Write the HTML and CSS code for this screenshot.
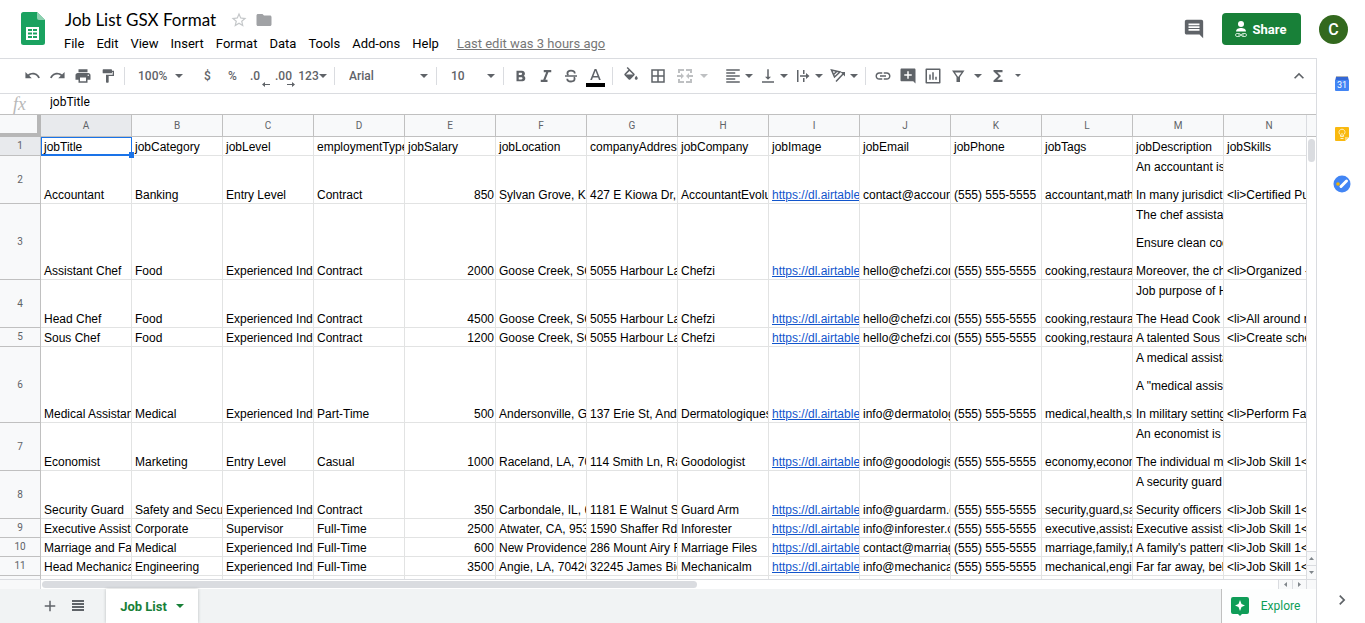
FILE: index.html
```html
<!DOCTYPE html>
<html lang="en">
<head>
    <meta charset="UTF-8">
    <meta name="viewport" content="width=device-width, initial-scale=1.0">
    <title>Job List GSX Format</title>
    <link rel="stylesheet" href="styles.css">
</head>
<body>
    <header class="header">
        <a class="logo" href="#" aria-label="Sheets home">
            <svg width="24" height="33" viewBox="0 0 24 33">
                <path fill="#1aa260" d="M2.500 0H16l8 8v22.500a2.500 2.500 0 0 1-2.500 2.500h-19A2.500 2.500 0 0 1 0 30.500v-28A2.500 2.500 0 0 1 2.500 0z"/>
                <path fill="#8ed1b1" d="M16 0l8 8h-6a2 2 0 0 1-2-2z"/>
                <path fill="#fff" fill-rule="evenodd" d="M5 15h13v13H5zM7 17v2h4v-2zM12 17v2h4v-2zM7 20.500v2h4v-2zM12 20.500v2h4v-2zM7 24v2h4v-2zM12 24v2h4v-2z"/>
            </svg>
        </a>
        <div class="doc-info">
            <div class="title-row">
                <h1 class="doc-title">Job List GSX Format</h1>
                <button class="title-button" aria-label="Star">
                    <svg width="18" height="18" viewBox="0 0 24 24"><path fill="#c4c7c9" d="M22 9.240l-7.190-.62L12 2 9.190 8.630 2 9.240l5.460 4.730L5.820 21 12 17.270 18.180 21l-1.630-7.030L22 9.240zM12 15.400l-3.760 2.270 1-4.280-3.320-2.880 4.380-.38L12 6.100l1.710 4.040 4.380.38-3.320 2.880 1 4.280L12 15.400z"/></svg>
                </button>
                <button class="title-button" aria-label="Move to folder">
                    <svg width="18" height="18" viewBox="0 0 24 24"><path fill="#a0a2a5" d="M10 4H4c-1.100 0-2 .9-2 2v12c0 1.100.9 2 2 2h16c1.100 0 2-.9 2-2V8c0-1.100-.9-2-2-2h-8l-2-2z"/></svg>
                </button>
            </div>
            <nav class="menu-bar">
                <button>File</button>
                <button>Edit</button>
                <button>View</button>
                <button>Insert</button>
                <button>Format</button>
                <button>Data</button>
                <button>Tools</button>
                <button>Add-ons</button>
                <button>Help</button>
                <a class="last-edit" href="#">Last edit was 3 hours ago</a>
            </nav>
        </div>
        <div class="header-actions">
            <button class="comments-button" aria-label="Comments">
                <svg width="22" height="22" viewBox="0 0 24 24"><path fill="#5f6368" d="M21.990 4c0-1.100-.89-2-1.990-2H4c-1.100 0-2 .9-2 2v12c0 1.100.9 2 2 2h14l4 4-.01-18zM18 14H6v-2h12v2zm0-3H6V9h12v2zm0-3H6V6h12v2z"/></svg>
            </button>
            <button class="share-button">
                <svg width="14" height="18" viewBox="0 0 14 18">
                    <circle cx="7" cy="4" r="3" fill="#fff"/>
                    <path fill="#fff" d="M2 11.500c0-2.500 2.500-3.500 5-3.500s5 1 5 3.500z"/>
                    <g fill="none" stroke="#c5e3cd"><rect x="1.500" y="13.500" width="5" height="3" rx="1.500"/><rect x="7.500" y="13.500" width="5" height="3" rx="1.500"/><path d="M4 15h6"/></g>
                </svg>
                <span>Share</span>
            </button>
            <button class="avatar" aria-label="Account">C</button>
        </div>
    </header>

    <div class="workspace">
        <main class="editor">
            <div class="toolbar">
                <div class="tools">
                    <button aria-label="Undo"><svg width="17" height="17" viewBox="0 0 24 24"><path d="M12.500 8c-2.650 0-5.050.99-6.900 2.600L2 7v9h9l-3.620-3.620c1.390-1.160 3.160-1.880 5.120-1.880 3.540 0 6.550 2.310 7.600 5.500l2.370-.78C21.080 11.030 17.150 8 12.500 8z"/></svg></button>
                    <button aria-label="Redo"><svg width="17" height="17" viewBox="0 0 24 24"><path d="M18.400 10.600C16.550 8.990 14.150 8 11.500 8c-4.650 0-8.580 3.030-9.960 7.220L3.900 16c1.050-3.190 4.050-5.500 7.600-5.500 1.950 0 3.730.72 5.120 1.880L13 16h9V7l-3.600 3.600z"/></svg></button>
                    <button aria-label="Print"><svg width="18" height="18" viewBox="0 0 24 24"><path d="M19 8H5c-1.660 0-3 1.340-3 3v6h4v4h12v-4h4v-6c0-1.660-1.340-3-3-3zm-3 11H8v-5h8v5zm3-7c-.55 0-1-.45-1-1s.45-1 1-1 1 .45 1 1-.45 1-1 1zm-1-9H6v4h12V3z"/></svg></button>
                    <button aria-label="Paint format"><svg width="16" height="16" viewBox="0 0 24 24"><path d="M18 4V3c0-.55-.45-1-1-1H5c-.55 0-1 .45-1 1v4c0 .55.45 1 1 1h12c.55 0 1-.45 1-1V6h1v4H9v11c0 .55.45 1 1 1h2c.55 0 1-.45 1-1v-9h8V4h-3z"/></svg></button>
                </div>
                <div class="tools">
                    <label class="picker zoom-picker">
                        <select aria-label="Zoom"><option>100%</option></select>
                        <svg class="caret" width="8" height="4" viewBox="0 0 8 4"><path d="M0 0h8L4 4z"/></svg>
                    </label>
                    <button aria-label="Format as currency">$</button>
                    <button aria-label="Format as percent">%</button>
                    <button class="decimals" aria-label="Decrease decimal places">.0<svg width="8" height="5" viewBox="0 0 8 5"><path d="M0 2.500L3 0v2h5v1H3v2z"/></svg></button>
                    <button class="decimals" aria-label="Increase decimal places">.00<svg width="8" height="5" viewBox="0 0 8 5"><path d="M8 2.500L5 0v2H0v1h5v2z"/></svg></button>
                    <button class="formats-button" aria-label="More formats">123<svg class="caret" width="8" height="4" viewBox="0 0 8 4"><path d="M0 0h8L4 4z"/></svg></button>
                </div>
                <div class="tools">
                    <label class="picker font-picker">
                        <select aria-label="Font"><option>Arial</option></select>
                        <svg class="caret" width="8" height="4" viewBox="0 0 8 4"><path d="M0 0h8L4 4z"/></svg>
                    </label>
                </div>
                <div class="tools">
                    <label class="picker size-picker">
                        <select aria-label="Font size"><option>10</option></select>
                        <svg class="caret" width="8" height="4" viewBox="0 0 8 4"><path d="M0 0h8L4 4z"/></svg>
                    </label>
                </div>
                <div class="tools">
                    <button aria-label="Bold"><svg width="18" height="18" viewBox="0 0 24 24"><path d="M15.600 11.790c.97-.67 1.650-1.770 1.650-2.790 0-2.260-1.750-4-4-4H6v14h8.040c2.090 0 3.710-1.700 3.710-3.790 0-1.520-.86-2.820-2.150-3.420zM9 7.500h3c.83 0 1.500.67 1.500 1.500s-.67 1.500-1.500 1.500H9v-3zm3.500 9H9v-3h3.500c.83 0 1.500.67 1.500 1.500s-.67 1.500-1.500 1.500z"/></svg></button>
                    <button aria-label="Italic"><svg width="18" height="18" viewBox="0 0 24 24"><path d="M9 4v3h3.200l-3.900 10H5v3h9v-3h-2.700l3.900-10H19V4z"/></svg></button>
                    <button aria-label="Strikethrough"><svg width="18" height="18" viewBox="0 0 24 24"><path d="M4 11h16v2H4z"/><path fill="none" stroke="#5f6368" stroke-width="2.400" d="M17 8.500C17 6 15 4.700 12 4.700S7.200 6 7.200 8.200c0 1 .5 1.800 1.300 2.400M7 15.500c0 2.500 2 3.800 5 3.800s4.800-1.300 4.800-3.500c0-.9-.3-1.600-.9-2.200"/></svg></button>
                    <button class="text-color" aria-label="Text color"><svg width="19" height="20" viewBox="0 0 19 20"><path d="M8.600 1L4.200 12H6l.9-2.500h5.200L13 12h1.800L10.400 1zM7.500 8l2-5.300 2 5.300z"/><path fill="#000" d="M0 15h19v4H0z"/></svg></button>
                </div>
                <div class="tools">
                    <button class="wide" aria-label="Fill color"><svg width="18" height="18" viewBox="0 0 24 24"><path d="M16.560 8.940L7.620 0 6.210 1.410l2.380 2.380-5.150 5.150c-.59.59-.59 1.540 0 2.120l5.500 5.500c.29.29.68.44 1.060.44s.77-.15 1.060-.44l5.500-5.500c.59-.58.59-1.530 0-2.120zM5.210 10L10 5.210 14.790 10H5.210zM19 11.500s-2 2.170-2 3.500c0 1.100.9 2 2 2s2-.9 2-2c0-1.330-2-3.500-2-3.500z"/></svg></button>
                    <button class="wide" aria-label="Borders"><svg width="18" height="18" viewBox="0 0 24 24"><path d="M3 3v18h18V3H3zm8 16H5v-6h6v6zm0-8H5V5h6v6zm8 8h-6v-6h6v6zm0-8h-6V5h6v6z"/></svg></button>
                    <button class="merge-button" aria-label="Merge cells" disabled><svg width="18" height="18" viewBox="0 0 18 18"><path d="M2 2h6v2H4v2H2zM10 2h6v4h-2V4h-4zM2 12h2v2h4v2H2zM14 12h2v4h-6v-2h4zM1 8h4V6l3 3-3 3v-2H1zM17 8h-4V6l-3 3 3 3v-2h4z"/></svg><svg class="caret" width="8" height="4" viewBox="0 0 8 4"><path d="M0 0h8L4 4z"/></svg></button>
                    <button class="menu-button" aria-label="Horizontal align"><svg width="18" height="18" viewBox="0 0 24 24"><path d="M15 15H3v2h12v-2zm0-8H3v2h12V7zM3 13h18v-2H3v2zm0 8h18v-2H3v2zM3 3v2h18V3H3z"/></svg><svg class="caret" width="8" height="4" viewBox="0 0 8 4"><path d="M0 0h8L4 4z"/></svg></button>
                    <button class="menu-button" aria-label="Vertical align"><svg width="18" height="18" viewBox="0 0 24 24"><path d="M16 13h-3V3h-2v10H8l4 4 4-4zM4 19v2h16v-2H4z"/></svg><svg class="caret" width="8" height="4" viewBox="0 0 8 4"><path d="M0 0h8L4 4z"/></svg></button>
                    <button class="menu-button" aria-label="Text wrapping"><svg width="18" height="18" viewBox="0 0 18 18"><path d="M3 3h1.500v12H3zM9 3h1.500v4H9zM9 11h1.500v4H9zM6 8.200h6V6l3.500 3L12 12V9.800H6z"/></svg><svg class="caret" width="8" height="4" viewBox="0 0 8 4"><path d="M0 0h8L4 4z"/></svg></button>
                    <button class="menu-button" aria-label="Text rotation"><svg width="18" height="18" viewBox="0 0 18 18"><path fill="none" stroke="#5f6368" stroke-width="1.500" d="M2.500 3L11 5 5.500 10zM8 4.200L4.500 7.500M7 14.500l8-8.500"/><path d="M11.500 5H16v4.500z"/></svg><svg class="caret" width="8" height="4" viewBox="0 0 8 4"><path d="M0 0h8L4 4z"/></svg></button>
                </div>
                <div class="tools">
                    <button aria-label="Insert link"><svg width="18" height="18" viewBox="0 0 24 24"><path d="M3.900 12c0-1.710 1.390-3.100 3.100-3.100h4V7H7c-2.760 0-5 2.240-5 5s2.240 5 5 5h4v-1.900H7c-1.710 0-3.100-1.390-3.100-3.100zM8 13h8v-2H8v2zm9-6h-4v1.900h4c1.710 0 3.100 1.390 3.100 3.100s-1.390 3.100-3.100 3.100h-4V17h4c2.760 0 5-2.240 5-5s-2.240-5-5-5z"/></svg></button>
                    <button aria-label="Insert comment"><svg width="18" height="18" viewBox="0 0 24 24"><path d="M22 22V3.500c0-.9-.6-1.500-1.500-1.500h-17C2.600 2 2 2.600 2 3.500v14c0 .9.6 1.500 1.500 1.500H19zM17 11.500h-4v4h-2v-4H7v-2h4v-4h2v4h4z"/></svg></button>
                    <button aria-label="Insert chart"><svg width="18" height="18" viewBox="0 0 24 24"><path d="M3 2h18v0c.6 0 1 .4 1 1v18c0 .6-.4 1-1 1H3c-.6 0-1-.4-1-1V3c0-.6.4-1 1-1zm1 2v16h16V4zM7 10h2v7H7zM11 7h2v10h-2zM15 13h2v4h-2z" fill-rule="evenodd"/></svg></button>
                    <button aria-label="Create a filter"><svg width="18" height="18" viewBox="0 0 18 18"><path fill-rule="evenodd" d="M3 3.500h12.500L11 10v5H7.500v-5zM6 5.500L9.200 10 12.500 5.500z"/></svg></button>
                    <button class="slim" aria-label="Filter views"><svg class="caret" width="8" height="4" viewBox="0 0 8 4"><path d="M0 0h8L4 4z"/></svg></button>
                    <button aria-label="Functions"><svg width="18" height="18" viewBox="0 0 24 24"><path d="M18 4H6v2l6.500 6L6 18v2h12v-3h-7l5-5-5-5h7z"/></svg></button>
                    <button class="slim" aria-label="More functions"><svg class="caret" width="6" height="3" viewBox="0 0 6 3"><path d="M0 0h6L3 3z"/></svg></button>
                </div>
                <button class="collapse-button" aria-label="Hide the menus"><svg width="20" height="20" viewBox="0 0 24 24"><path d="M12 8l-6 6 1.410 1.410L12 10.830l4.590 4.580L18 14z"/></svg></button>
            </div>

            <div class="formula-bar">
                <label class="fx" for="formula">fx</label>
                <input id="formula" class="formula-input" type="text" value="jobTitle">
            </div>

            <div class="sheet">
                <div class="grid">
                    <table>
                        <thead>
                            <tr>
                                <th class="corner"></th>
                                <th class="selected">A</th><th>B</th><th>C</th><th>D</th><th>E</th><th>F</th><th>G</th><th>H</th><th>I</th><th>J</th><th>K</th><th>L</th><th>M</th><th>N</th>
                            </tr>
                        </thead>
                        <tbody>
                            <tr>
                                <th class="selected">1</th>
                                <td class="active-cell">jobTitle</td><td>jobCategory</td><td>jobLevel</td><td>employmentType</td><td>jobSalary</td><td>jobLocation</td><td>companyAddress</td><td>jobCompany</td><td>jobImage</td><td>jobEmail</td><td>jobPhone</td><td>jobTags</td><td>jobDescription</td><td>jobSkills</td>
                            </tr>
                            <tr class="medium">
                                <th>2</th>
                                <td>Accountant</td><td>Banking</td><td>Entry Level</td><td>Contract</td><td class="number">850</td><td>Sylvan Grove, KS</td><td>427 E Kiowa Dr,</td><td>AccountantEvolu</td><td><a href="#">https://dl.airtable.</a></td><td>contact@accoun</td><td>(555) 555-5555</td><td>accountant,math,</td><td>An accountant is<br><br>In many jurisdicti</td><td>&lt;li&gt;Certified Pu</td>
                            </tr>
                            <tr class="tall">
                                <th>3</th>
                                <td>Assistant Chef</td><td>Food</td><td>Experienced Indi</td><td>Contract</td><td class="number">2000</td><td>Goose Creek, SC</td><td>5055 Harbour La</td><td>Chefzi</td><td><a href="#">https://dl.airtable.</a></td><td>hello@chefzi.com</td><td>(555) 555-5555</td><td>cooking,restaurar</td><td>The chef assistar<br><br>Ensure clean coo<br><br>Moreover, the che</td><td>&lt;li&gt;Organized -</td>
                            </tr>
                            <tr class="medium">
                                <th>4</th>
                                <td>Head Chef</td><td>Food</td><td>Experienced Indi</td><td>Contract</td><td class="number">4500</td><td>Goose Creek, SC</td><td>5055 Harbour La</td><td>Chefzi</td><td><a href="#">https://dl.airtable.</a></td><td>hello@chefzi.com</td><td>(555) 555-5555</td><td>cooking,restaurar</td><td>Job purpose of H<br><br>The Head Cook o</td><td>&lt;li&gt;All around r</td>
                            </tr>
                            <tr>
                                <th>5</th>
                                <td>Sous Chef</td><td>Food</td><td>Experienced Indi</td><td>Contract</td><td class="number">1200</td><td>Goose Creek, SC</td><td>5055 Harbour La</td><td>Chefzi</td><td><a href="#">https://dl.airtable.</a></td><td>hello@chefzi.com</td><td>(555) 555-5555</td><td>cooking,restaurar</td><td>A talented Sous C</td><td>&lt;li&gt;Create sche</td>
                            </tr>
                            <tr class="tall">
                                <th>6</th>
                                <td>Medical Assistan</td><td>Medical</td><td>Experienced Indi</td><td>Part-Time</td><td class="number">500</td><td>Andersonville, GA</td><td>137 Erie St, Ande</td><td>Dermatologiques</td><td><a href="#">https://dl.airtable.</a></td><td>info@dermatolog</td><td>(555) 555-5555</td><td>medical,health,sa</td><td>A medical assista<br><br>A "medical assist<br><br>In military setting</td><td>&lt;li&gt;Perform Fac</td>
                            </tr>
                            <tr class="medium">
                                <th>7</th>
                                <td>Economist</td><td>Marketing</td><td>Entry Level</td><td>Casual</td><td class="number">1000</td><td>Raceland, LA, 70</td><td>114 Smith Ln, Ra</td><td>Goodologist</td><td><a href="#">https://dl.airtable.</a></td><td>info@goodologis</td><td>(555) 555-5555</td><td>economy,econom</td><td>An economist is a<br><br>The individual ma</td><td>&lt;li&gt;Job Skill 1&lt;</td>
                            </tr>
                            <tr class="medium">
                                <th>8</th>
                                <td>Security Guard</td><td>Safety and Secur</td><td>Experienced Indi</td><td>Contract</td><td class="number">350</td><td>Carbondale, IL, 6</td><td>1181 E Walnut St</td><td>Guard Arm</td><td><a href="#">https://dl.airtable.</a></td><td>info@guardarm.c</td><td>(555) 555-5555</td><td>security,guard,sa</td><td>A security guard<br><br>Security officers a</td><td>&lt;li&gt;Job Skill 1&lt;</td>
                            </tr>
                            <tr>
                                <th>9</th>
                                <td>Executive Assista</td><td>Corporate</td><td>Supervisor</td><td>Full-Time</td><td class="number">2500</td><td>Atwater, CA, 953</td><td>1590 Shaffer Rd,</td><td>Inforester</td><td><a href="#">https://dl.airtable.</a></td><td>info@inforester.c</td><td>(555) 555-5555</td><td>executive,assista</td><td>Executive assista</td><td>&lt;li&gt;Job Skill 1&lt;</td>
                            </tr>
                            <tr>
                                <th>10</th>
                                <td>Marriage and Far</td><td>Medical</td><td>Experienced Indi</td><td>Full-Time</td><td class="number">600</td><td>New Providence,</td><td>286 Mount Airy R</td><td>Marriage Files</td><td><a href="#">https://dl.airtable.</a></td><td>contact@marriag</td><td>(555) 555-5555</td><td>marriage,family,th</td><td>A family's pattern</td><td>&lt;li&gt;Job Skill 1&lt;</td>
                            </tr>
                            <tr>
                                <th>11</th>
                                <td>Head Mechanica</td><td>Engineering</td><td>Experienced Indi</td><td>Full-Time</td><td class="number">3500</td><td>Angie, LA, 70426</td><td>32245 James Bic</td><td>Mechanicalm</td><td><a href="#">https://dl.airtable.</a></td><td>info@mechanica</td><td>(555) 555-5555</td><td>mechanical,engir</td><td>Far far away, beh</td><td>&lt;li&gt;Job Skill 1&lt;</td>
                            </tr>
                            <tr>
                                <th></th>
                                <td></td><td></td><td></td><td></td><td></td><td></td><td></td><td></td><td></td><td></td><td></td><td></td><td></td><td></td>
                            </tr>
                        </tbody>
                    </table>
                </div>
                <div class="scroll-y">
                    <div class="scroll-head"></div>
                    <div class="thumb-y"></div>
                    <button aria-label="Scroll up"><svg width="5" height="3" viewBox="0 0 5 3"><path d="M0 3h5L2.500 0z"/></svg></button>
                    <button aria-label="Scroll down"><svg width="5" height="3" viewBox="0 0 5 3"><path d="M0 0h5L2.500 3z"/></svg></button>
                </div>
                <div class="scroll-x">
                    <div class="scroll-start"></div>
                    <div class="track-x"><div class="thumb-x"></div></div>
                    <button aria-label="Scroll left"><svg width="3" height="5" viewBox="0 0 3 5"><path d="M3 0v5L0 2.500z"/></svg></button>
                    <button aria-label="Scroll right"><svg width="3" height="5" viewBox="0 0 3 5"><path d="M0 0v5l3-2.500z"/></svg></button>
                </div>
                <div class="scroll-corner"></div>
            </div>

            <footer class="sheet-tabs">
                <button class="tab-tool" aria-label="Add sheet"><svg width="18" height="18" viewBox="0 0 24 24"><path d="M19 13h-6v6h-2v-6H5v-2h6V5h2v6h6z"/></svg></button>
                <button class="tab-tool" aria-label="All sheets"><svg width="18" height="18" viewBox="0 0 18 18"><path d="M3 3h12v2H3zM3 6h12v2H3zM3 9h12v2H3zM3 12h12v2H3z"/></svg></button>
                <button class="tab">Job List<svg width="8" height="4" viewBox="0 0 8 4"><path d="M0 0h8L4 4z"/></svg></button>
                <button class="explore-button">
                    <svg width="18" height="19" viewBox="0 0 18 19"><path fill="#0f9d58" d="M2 0h14a2 2 0 0 1 2 2v13a2 2 0 0 1-2 2h-5l-2 2-2-2H2a2 2 0 0 1-2-2V2a2 2 0 0 1 2-2z"/><path fill="#fff" d="M9 3l1.500 4L14 8.500 10.500 10 9 14l-1.500-4L4 8.500 7.500 7z"/></svg>
                    <span>Explore</span>
                </button>
            </footer>
        </main>

        <aside class="side-panel">
            <button aria-label="Calendar">
                <svg width="16" height="16" viewBox="0 0 16 16">
                    <path fill="#b0b4ba" d="M2 0h12v2H2z"/><path fill="#3367d6" d="M2 1h12l1 4H1z"/><rect x="1" y="4" width="14" height="11" rx="1" fill="#4285f4"/>
                    <text class="calendar-day" x="8" y="12" text-anchor="middle">31</text>
                </svg>
            </button>
            <button aria-label="Keep">
                <svg width="16" height="16" viewBox="0 0 16 16">
                    <path fill="#f9b90f" d="M2 1h12a1 1 0 0 1 1 1v9l-4 4H2a1 1 0 0 1-1-1V2a1 1 0 0 1 1-1z"/><path fill="#fcd876" d="M11 15v-4h4z"/>
                    <path fill="none" stroke="#fff0c0" d="M6.500 10.500v-1.700a3 3 0 1 1 3 0v1.700zM6.500 12.500h3M8 10V7"/>
                </svg>
            </button>
            <button aria-label="Tasks">
                <svg width="18" height="18" viewBox="0 0 18 18">
                    <circle cx="9" cy="9" r="8.500" fill="#4285f4"/><path stroke="#fff" stroke-width="3" stroke-linecap="round" d="M8 11.500L13.500 6"/><circle cx="5" cy="9" r="1.800" fill="#f4b400"/>
                </svg>
            </button>
            <button class="hide-panel" aria-label="Hide side panel">
                <svg width="20" height="20" viewBox="0 0 24 24"><path fill="#5f6368" d="M10 6L8.590 7.410 13.170 12l-4.580 4.590L10 18l6-6z"/></svg>
            </button>
        </aside>
    </div>
</body>
</html>
```
FILE: styles.css
```css
* {
    box-sizing: border-box;
}
body {
    margin: 0;
    height: 100vh;
    display: flex;
    flex-direction: column;
    overflow: hidden;
    background: #fff;
    color: #202124;
    font-family: Roboto, 'Liberation Sans', sans-serif;
    font-size: 13px;
}
button {
    padding: 0;
    border: none;
    background: none;
    color: inherit;
    font: inherit;
    display: flex;
    align-items: center;
    justify-content: center;
    cursor: pointer;
}
svg {
    display: block;
    flex: none;
}

/* header */
.header {
    height: 58px;
    flex: none;
    display: flex;
}
.logo {
    padding: 12px 0 0 21px;
}
.doc-info {
    flex: 1;
    padding: 9px 0 0 12px;
}
.title-row {
    display: flex;
    align-items: center;
    height: 22px;
    padding-left: 8px;
    gap: 7px;
}
.doc-title {
    margin: 0 7px 0 0;
    font-family: Lato, sans-serif;
    font-size: 17px;
    font-weight: 400;
    line-height: 22px;
    color: #000;
}
.menu-bar {
    display: flex;
    align-items: center;
    height: 25px;
    padding-left: 1px;
}
.menu-bar button {
    padding: 0 6px;
    color: #000;
}
.last-edit {
    margin-left: 12px;
    color: #777;
}
.header-actions {
    display: flex;
    align-items: center;
    padding-right: 17px;
}
.comments-button {
    margin-right: 17px;
}
.share-button {
    width: 79px;
    height: 32px;
    margin-right: 18px;
    padding-right: 3px;
    gap: 5px;
    border-radius: 4px;
    background: #188038;
    color: #fff;
    font-weight: 700;
}
.avatar {
    width: 29px;
    height: 29px;
    border-radius: 50%;
    background: #33691e;
    color: #fff;
    font-size: 16px;
    font-weight: 500;
}

.workspace {
    flex: 1;
    min-height: 0;
    display: flex;
}
.editor {
    flex: 1;
    min-width: 0;
    display: flex;
    flex-direction: column;
    border-top: 1px solid #dadce0;
}

/* toolbar */
.toolbar {
    height: 35px;
    flex: none;
    display: flex;
    align-items: center;
    padding: 0 0 1px 20px;
    border-bottom: 1px solid #dadce0;
    color: #5f6368;
    font-size: 12px;
    font-weight: 500;
}
.toolbar svg {
    fill: #5f6368;
}
.tools {
    display: flex;
    align-items: center;
}
.tools + .tools::before {
    content: '';
    width: 1px;
    height: 18px;
    margin: 0 4px;
    background: #dadce0;
}
.tools button {
    width: 25px;
    height: 26px;
}
.tools .wide {
    width: 27px;
}
.tools .slim {
    width: 15px;
}
.tools .formats-button {
    width: 35px;
}
.tools .menu-button {
    width: 35px;
    gap: 3px;
}
.tools .merge-button {
    width: 50px;
    padding-right: 9px;
    gap: 6px;
    opacity: 0.4;
}
.tools .decimals {
    align-items: flex-start;
    flex-direction: column;
    position: relative;
    padding-left: 5px;
}
.decimals svg {
    position: absolute;
    right: 0;
    bottom: 2px;
}
.text-color svg {
    margin-top: 4px;
}
.picker {
    display: flex;
    align-items: center;
    padding: 0 4px 0 10px;
}
.picker select {
    flex: 1;
    min-width: 0;
    padding: 0;
    border: none;
    background: none;
    appearance: none;
    color: inherit;
    font: inherit;
    outline: none;
}
.zoom-picker {
    width: 66px;
    padding: 0 12px 0 9px;
}
.font-picker {
    width: 93px;
}
.size-picker {
    width: 58px;
}
.collapse-button {
    margin: 0 7px 0 auto;
}

/* formula bar */
.formula-bar {
    height: 21px;
    flex: none;
    display: flex;
    align-items: center;
    border-bottom: 1px solid #c0c0c0;
}
.fx {
    width: 47px;
    padding-left: 13px;
    color: #b8b8b8;
    font-family: 'Liberation Serif', serif;
    font-size: 18px;
    font-style: italic;
    line-height: 18px;
}
.formula-input {
    flex: 1;
    height: 16px;
    padding: 0 3px;
    margin-bottom: 4px;
    border: none;
    outline: none;
    color: #000;
    font: 12px Roboto, sans-serif;
}

/* spreadsheet */
.sheet {
    flex: 1;
    min-height: 0;
    display: grid;
    grid-template-columns: minmax(0, 1fr) 10px;
    grid-template-rows: minmax(0, 1fr) 10px;
}
.grid {
    overflow: hidden;
}
table {
    width: 1315px;
    table-layout: fixed;
    border-spacing: 0;
    color: #000;
    font-family: 'Liberation Sans', Arial, sans-serif;
    font-size: 12px;
    line-height: 14px;
}
th {
    width: 91px;
    padding: 0;
    border-right: 1px solid #c0c0c0;
    border-bottom: 1px solid #c0c0c0;
    background: #f8f9fa;
    color: #5f6368;
    font-family: Roboto, sans-serif;
    font-size: 10px;
    font-weight: 400;
}
thead th {
    height: 22px;
}
.corner {
    width: 41px;
    border-right: 4px solid #b7b7b7;
    border-bottom: 4px solid #b7b7b7;
}
th.selected {
    background: #e8eaed;
}
tbody tr {
    height: 19px;
}
tbody .medium {
    height: 48px;
}
tbody .tall {
    height: 76px;
}
td {
    padding: 1px 1px 1px 3px;
    border-right: 1px solid #e2e3e3;
    border-bottom: 1px solid #e2e3e3;
    overflow: hidden;
    white-space: nowrap;
    vertical-align: bottom;
}
td a {
    color: #1155cc;
}
.number {
    text-align: right;
}
.active-cell {
    position: relative;
    overflow: visible;
}
.active-cell::before {
    content: '';
    position: absolute;
    inset: 0 -1px -1px 0;
    border: 1px solid #1a73e8;
    border-bottom-width: 2px;
}
.active-cell::after {
    content: '';
    position: absolute;
    right: -3px;
    bottom: -3px;
    width: 5px;
    height: 6px;
    background: #1a73e8;
}

/* scrollbars */
.scroll-y {
    display: flex;
    flex-direction: column;
    border-left: 1px solid #dadce0;
}
.scroll-head {
    height: 22px;
    flex: none;
    background: #f8f9fa;
    border-bottom: 1px solid #c0c0c0;
}
.thumb-y {
    height: 23px;
    margin: 2px 1px auto;
    border-radius: 4px;
    background: #dadce0;
}
.sheet svg {
    fill: #80868b;
}
.scroll-y button {
    height: 14px;
    border-top: 1px solid #dadce0;
    background: #f8f9fa;
}
.scroll-x {
    display: flex;
    border-top: 1px solid #dadce0;
}
.scroll-start {
    width: 41px;
    background: #f8f9fa;
    border-right: 1px solid #dadce0;
}
.track-x {
    flex: 1;
    padding: 1px;
}
.thumb-x {
    width: 53%;
    height: 7px;
    border-radius: 4px;
    background: #dadce0;
}
.scroll-x button {
    width: 14px;
    border-left: 1px solid #dadce0;
    background: #f8f9fa;
}
.scroll-corner {
    background: #f8f9fa;
    border-left: 1px solid #dadce0;
    border-top: 1px solid #dadce0;
}

/* bottom bar */
.sheet-tabs {
    height: 34px;
    flex: none;
    display: flex;
    padding-left: 36px;
    background: #f1f3f4;
}
.tab-tool {
    width: 28px;
}
.tab-tool svg {
    fill: #5f6368;
}
.tab {
    width: 92px;
    margin-left: 14px;
    gap: 9px;
    background: #fff;
    box-shadow: 0 0 3px rgba(60, 64, 67, 0.3);
    color: #188038;
    font-weight: 700;
}
.tab svg {
    fill: #188038;
}
.explore-button {
    width: 95px;
    margin-left: auto;
    padding-right: 7px;
    gap: 12px;
    border-left: 1px solid #c0c0c0;
    background: #fdfefe;
    color: #0f9d58;
    font-size: 12px;
}

/* side panel */
.side-panel {
    width: 49px;
    flex: none;
    display: flex;
    flex-direction: column;
    align-items: center;
    padding: 1px 0 13px 1px;
    border-left: 1px solid #dadce0;
}
.side-panel button {
    width: 40px;
    height: 50px;
}
.side-panel .hide-panel {
    height: 20px;
    margin-top: auto;
}
.calendar-day {
    fill: #fff;
    font-size: 9px;
}
```
